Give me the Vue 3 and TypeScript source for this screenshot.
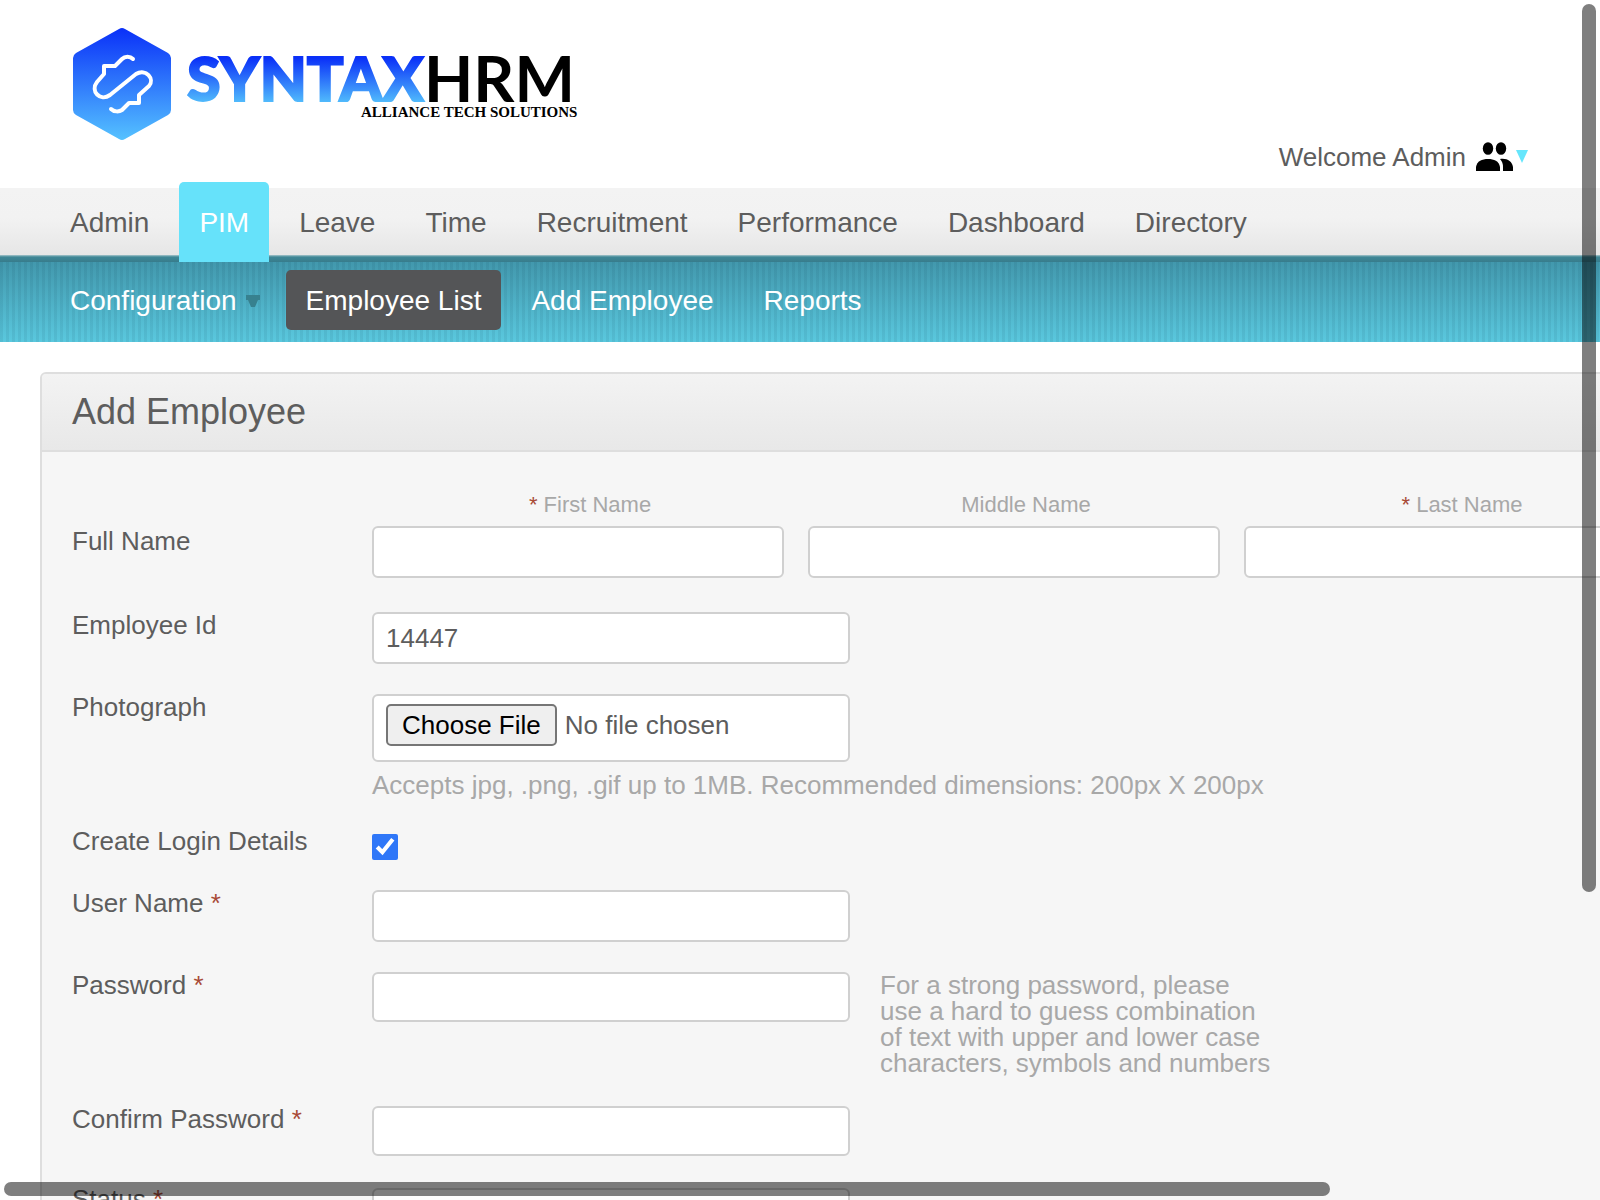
<script setup lang="ts">
import { ref } from 'vue'

interface NavItem {
  label: string
  active?: boolean
  menu?: boolean
}

const mainNav: NavItem[] = [
  { label: 'Admin' },
  { label: 'PIM', active: true },
  { label: 'Leave' },
  { label: 'Time' },
  { label: 'Recruitment' },
  { label: 'Performance' },
  { label: 'Dashboard' },
  { label: 'Directory' },
]

const subNav: NavItem[] = [
  { label: 'Configuration', menu: true },
  { label: 'Employee List', active: true },
  { label: 'Add Employee' },
  { label: 'Reports' },
]

const names = [
  { id: 'first', label: 'First Name', required: true },
  { id: 'middle', label: 'Middle Name', required: false },
  { id: 'last', label: 'Last Name', required: true },
]

const employeeId = ref('14447')
const createLogin = ref(true)
</script>

<template>
  <div class="window">
    <div class="page">
      <header class="header">
        <svg class="logo" width="520" height="120" viewBox="0 0 520 120" role="img" aria-label="Syntax HRM">
          <defs>
            <linearGradient id="hex" x1="0" y1="0" x2="0" y2="1">
              <stop offset="0" stop-color="#0a30f8" />
              <stop offset="1" stop-color="#55c2ff" />
            </linearGradient>
            <linearGradient id="word" gradientUnits="userSpaceOnUse" x1="0" y1="32" x2="0" y2="77">
              <stop offset="0" stop-color="#0a30f8" />
              <stop offset="1" stop-color="#52bdfc" />
            </linearGradient>
          </defs>
          <path d="M49 3Q52 1 55 3L98 27Q101 29 101 32V84Q101 87 98 89L55 113Q52 115 49 113L6 89Q3 87 3 84V32Q3 29 6 27Z" fill="url(#hex)" />
          <path
            d="M63 33C60 30 55 30 52 33L45 40H34V48L27 56C20 65 30 76 40 69L66 48C76 42 85 53 79 60L69 69V77H59L52 84C49 86 44 86 41 83"
            fill="none" stroke="#fff" stroke-width="4" stroke-linecap="round" stroke-linejoin="round"
          />
          <text class="word" x="117" y="75" fill="url(#word)" stroke="url(#word)">SYNTAX</text>
          <text class="suffix" x="354" y="76">HRM</text>
          <text class="tagline" x="291" y="91">ALLIANCE TECH SOLUTIONS</text>
        </svg>
        <button type="button" class="welcome">
          <span>Welcome Admin</span>
          <svg class="people" width="37" height="30" viewBox="0 0 37 30" aria-hidden="true">
            <ellipse cx="12" cy="6.500" rx="5.200" ry="6.300" />
            <ellipse cx="25" cy="6.500" rx="5.200" ry="6.300" />
            <path d="M0 29V25C1 19 6 17 12 17S23 19 24 25V29Z" />
            <path d="M24 17C31 16 36 19 37 25V29H27V25Q27 20 24 17Z" />
          </svg>
          <svg width="12" height="15" viewBox="0 0 12 15" aria-hidden="true"><path d="M0 0H12L6 13Z" fill="#66e6fc" /></svg>
        </button>
      </header>

      <nav class="main-nav" aria-label="Main">
        <a v-for="item in mainNav" :key="item.label" href="#" :class="{ active: item.active }">{{ item.label }}</a>
      </nav>
      <nav class="sub-nav" aria-label="Section">
        <a v-for="item in subNav" :key="item.label" href="#" :class="{ active: item.active }">
          {{ item.label }}
          <svg v-if="item.menu" width="14" height="13" viewBox="0 0 14 13" aria-hidden="true"><path d="M0 0H14V5H12L9 12H5L2 5H0Z" fill="#37818f" /></svg>
        </a>
      </nav>

      <main class="panel">
        <h1>Add Employee</h1>
        <form class="form" @submit.prevent>
          <div class="row names">
            <span class="label">Full Name</span>
            <div class="name-list">
              <div v-for="n in names" :key="n.id" class="name">
                <label :for="n.id"><em v-if="n.required">*</em> {{ n.label }}</label>
                <input :id="n.id" type="text">
              </div>
            </div>
          </div>
          <div class="row">
            <label for="empid">Employee Id</label>
            <input id="empid" v-model="employeeId" type="text">
          </div>
          <div class="row">
            <label for="photo">Photograph</label>
            <div>
              <input id="photo" type="file">
              <p class="note">Accepts jpg, .png, .gif up to 1MB. Recommended dimensions: 200px X 200px</p>
            </div>
          </div>
          <div class="row">
            <label for="login">Create Login Details</label>
            <input id="login" v-model="createLogin" type="checkbox">
          </div>
          <div class="row">
            <label for="user">User Name <em>*</em></label>
            <input id="user" type="text">
          </div>
          <div class="row">
            <label for="pass">Password <em>*</em></label>
            <input id="pass" type="password">
            <p class="hint">For a strong password, please use a hard to guess combination of text with upper and lower case characters, symbols and numbers</p>
          </div>
          <div class="row">
            <label for="confirm">Confirm Password <em>*</em></label>
            <input id="confirm" type="password">
          </div>
          <div class="row">
            <label for="status">Status <em>*</em></label>
            <select id="status"><option>Enabled</option><option>Disabled</option></select>
          </div>
        </form>
      </main>
    </div>
    <div class="thumb vertical"></div>
    <div class="thumb horizontal"></div>
  </div>
</template>

<style>
body {
  margin: 0;
  background: #fff;
}
</style>

<style scoped>
* {
  box-sizing: border-box;
}

.window {
  position: relative;
  height: 100vh;
  overflow: hidden;
  color: #5d5d5d;
  font: 26px/26px "Liberation Sans", Arial, sans-serif;
}

.page {
  height: 100%;
  overflow: auto;
  scrollbar-width: none;
}

input,
select,
button {
  font: inherit;
  color: inherit;
}

.header {
  display: flex;
  justify-content: space-between;
  align-items: flex-end;
  height: 188px;
  padding: 0 72px 14px 70px;
}

.logo {
  align-self: flex-start;
  margin-top: 26px;
}

.word {
  font: 900 61px Lato, sans-serif;
  stroke-width: 2px;
}

.suffix {
  font: 700 64px Lato, sans-serif;
}

.tagline {
  font: 700 15px "Liberation Serif", serif;
}

.welcome {
  display: flex;
  align-items: center;
  height: 34px;
  padding: 0;
  border: 0;
  background: none;
}

.people {
  margin: 0 3px 0 10px;
}

.main-nav,
.sub-nav {
  display: flex;
  gap: 10px;
  padding-left: 50px;
  font-size: 28px;
  line-height: 32px;
}

.main-nav {
  position: relative;
  height: 74px;
  background: linear-gradient(#f3f3f3 0, #f2f2f2 30px, #e6e6e6 67px, #a9c7cd 67px, #3f8796 69px, #377c8c 74px);
}

a {
  color: inherit;
  text-decoration: none;
}

.main-nav a {
  height: 80px;
  margin-top: -6px;
  padding: 25px 20px 23px;
  border-radius: 5px 5px 0 0;
}

.main-nav .active {
  background: #66e2fa;
  color: #fff;
}

.sub-nav {
  align-items: center;
  height: 80px;
  padding-bottom: 4px;
  color: #fff;
  background:
    repeating-linear-gradient(90deg, rgba(0, 40, 60, 0.07) 0 3px, transparent 3px 6px),
    linear-gradient(#4298ad, #5ac8de);
}

.sub-nav a {
  display: flex;
  align-items: center;
  gap: 9px;
  height: 60px;
  padding: 2px 20px 0;
  border-radius: 5px;
}

.sub-nav a:first-child {
  padding-right: 16px;
}

.sub-nav .active {
  background: #545557;
}

.panel {
  width: 112%;
  min-width: 1740px;
  margin: 30px 0 30px 40px;
  border: 2px solid #dedede;
  border-radius: 6px;
  background: #f6f6f6;
}

h1 {
  margin: 0;
  padding: 17px 30px;
  border-bottom: 2px solid #dedede;
  border-radius: 4px 4px 0 0;
  background: linear-gradient(#f3f3f3, #e8e8e8);
  font-size: 36px;
  line-height: 42px;
  font-weight: 400;
}

.form {
  display: grid;
  gap: 30px;
  padding: 40px 30px;
}

.row {
  display: flex;
  align-items: flex-start;
}

.row > label,
.label {
  flex: 0 0 300px;
}

em {
  color: #a84a36;
  font-style: normal;
}

.names {
  padding-bottom: 4px;
}

.label {
  padding-top: 36px;
}

.name-list {
  display: flex;
}

.name {
  width: 436px;
}

.name label {
  display: block;
  margin-bottom: 8px;
  color: #a8a8a8;
  font-size: 22px;
  text-align: center;
}

input,
select {
  display: block;
  width: 478px;
  height: 52px;
  margin: 0;
  padding: 0 12px;
  border: 2px solid #d0d0d0;
  border-radius: 6px;
  background: #fff;
}

.name input {
  width: 412px;
}

input[type="password"] {
  height: 50px;
}

input[type="file"] {
  height: 68px;
  padding: 8px 12px;
}

input::file-selector-button {
  height: 42px;
  margin-right: 8px;
  padding: 0 14px;
  border: 2px solid #767676;
  border-radius: 5px;
  background: #efefef;
  color: #000;
  font: inherit;
}

input[type="checkbox"] {
  width: 26px;
  height: 26px;
  margin-top: 6px;
  accent-color: #2f77f8;
}

select {
  margin-top: 2px;
}

p {
  margin: 0;
  color: #a8a8a8;
}

.note {
  margin-top: 10px;
}

.hint {
  width: 394px;
  margin-left: 30px;
}

.thumb {
  position: absolute;
  border-radius: 7px;
  background: rgba(0, 0, 0, 0.5);
}

.vertical {
  top: 4px;
  right: 4px;
  width: 14px;
  height: 74%;
}

.horizontal {
  bottom: 4px;
  left: 4px;
  width: calc(83% - 2px);
  height: 14px;
}
</style>
